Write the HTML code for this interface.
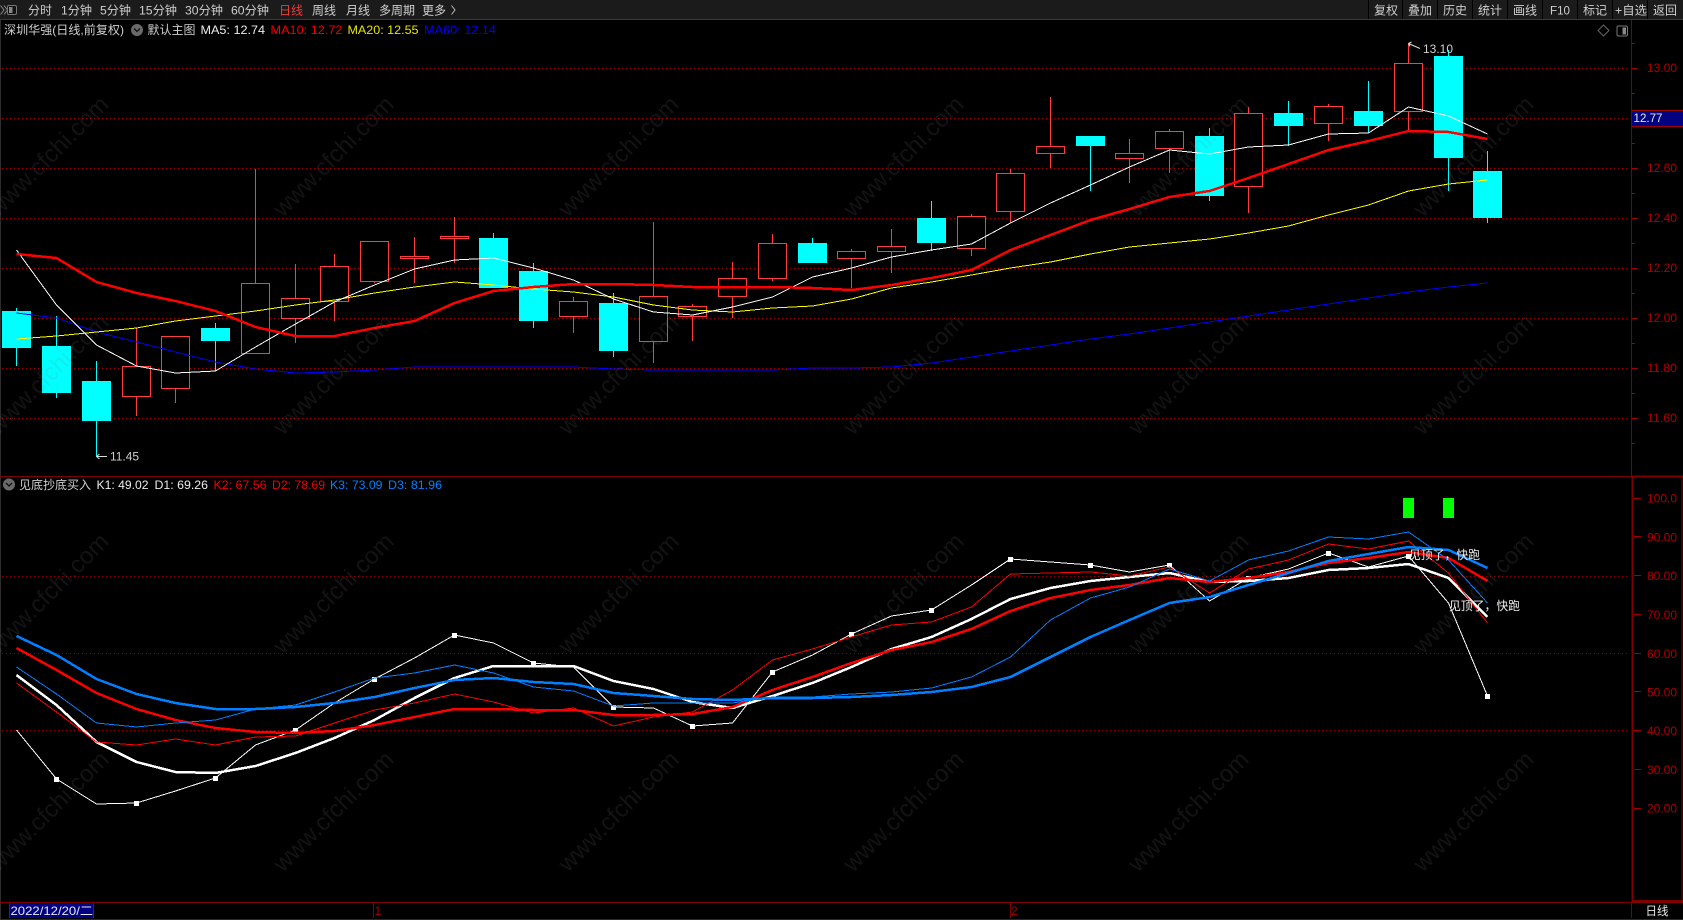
<!DOCTYPE html>
<html lang="zh">
<head>
<meta charset="utf-8">
<title>深圳华强</title>
<style>
html,body{margin:0;padding:0;background:#000;width:1683px;height:920px;overflow:hidden}
svg{display:block;position:absolute;left:0;top:0}
text{font-family:"Liberation Sans","Noto Sans CJK SC",sans-serif;font-size:12px}
.t{fill:#cfcfcf}
.ax{fill:#ad0000}
.wm{font-family:"Liberation Sans",sans-serif;font-size:24px;fill:#808080;fill-opacity:.15;text-anchor:middle}
.c{shape-rendering:crispEdges}
.l{fill:none;shape-rendering:crispEdges}
</style>
</head>
<body>
<svg width="1683" height="920" viewBox="0 0 1683 920" xmlns="http://www.w3.org/2000/svg">
<rect width="1683" height="920" fill="#000"/>

<!-- top bar -->
<g class="c">
<rect x="0" y="0" width="1683" height="19" fill="#1b1b1b"/>
<rect x="0" y="19" width="1683" height="1" fill="#3a3a3a"/>
<path d="M1368.5 0V19M1402.5 0V19M1437.5 0V19M1472.5 0V19M1507.5 0V19M1542.5 0V19M1577.5 0V19M1612.5 0V19M1647.5 0V19" stroke="#000" stroke-width="1"/>
<rect x="0" y="20" width="1" height="900" fill="#2d2d2d"/>
</g>
<path d="M0.5 5.5L4 10L0.5 14.5M4 5.5L7.500 10L4 14.5" fill="none" stroke="#888" stroke-width="1"/>
<rect x="7.500" y="5.500" width="9" height="9" rx="1.500" fill="#111" stroke="#777"/>
<rect x="9" y="7" width="3.500" height="6" fill="#888"/>

<text class="t" x="28" y="14.500" textLength="24" lengthAdjust="spacingAndGlyphs">分时</text>
<text class="t" x="61" y="14.500" textLength="31" lengthAdjust="spacingAndGlyphs">1分钟</text>
<text class="t" x="100" y="14.500" textLength="31" lengthAdjust="spacingAndGlyphs">5分钟</text>
<text class="t" x="139" y="14.500" textLength="38" lengthAdjust="spacingAndGlyphs">15分钟</text>
<text class="t" x="185" y="14.500" textLength="38" lengthAdjust="spacingAndGlyphs">30分钟</text>
<text class="t" x="231" y="14.500" textLength="38" lengthAdjust="spacingAndGlyphs">60分钟</text>
<text x="279" y="14.500" textLength="24" lengthAdjust="spacingAndGlyphs" fill="#f03a3a">日线</text>
<text class="t" x="312" y="14.500" textLength="24" lengthAdjust="spacingAndGlyphs">周线</text>
<text class="t" x="346" y="14.500" textLength="24" lengthAdjust="spacingAndGlyphs">月线</text>
<text class="t" x="379" y="14.500" textLength="36" lengthAdjust="spacingAndGlyphs">多周期</text>
<text class="t" x="422" y="14.500" textLength="24" lengthAdjust="spacingAndGlyphs">更多</text>
<path d="M451.500 5.500L455 10L451.500 14.500" fill="none" stroke="#bbb"/>

<text class="t" x="1374" y="14.500" textLength="24" lengthAdjust="spacingAndGlyphs">复权</text>
<text class="t" x="1408" y="14.500" textLength="24" lengthAdjust="spacingAndGlyphs">叠加</text>
<text class="t" x="1443" y="14.500" textLength="24" lengthAdjust="spacingAndGlyphs">历史</text>
<text class="t" x="1478" y="14.500" textLength="24" lengthAdjust="spacingAndGlyphs">统计</text>
<text class="t" x="1513" y="14.500" textLength="24" lengthAdjust="spacingAndGlyphs">画线</text>
<text class="t" x="1550" y="14.500" textLength="20" lengthAdjust="spacingAndGlyphs">F10</text>
<text class="t" x="1583" y="14.500" textLength="24" lengthAdjust="spacingAndGlyphs">标记</text>
<text class="t" x="1615" y="14.500" textLength="32" lengthAdjust="spacingAndGlyphs">+自选</text>
<text class="t" x="1653" y="14.500" textLength="24" lengthAdjust="spacingAndGlyphs">返回</text>

<!-- grid -->
<g class="c" stroke="#a00000" stroke-width="1" stroke-dasharray="1 3" fill="none">
<path d="M2 68.500H1628M2 118.500H1628M2 168.500H1628M2 218.500H1628M2 268.500H1628M2 318.500H1628M2 368.500H1628M2 418.500H1628"/>
<path d="M2 576.500H1628M2 653.500H1628M2 730.500H1628" stroke="#900000"/>
</g>

<!-- axes -->
<g class="c" fill="none" stroke="#800000">
<path d="M1631.500 20V476"/>
<path d="M0 476.500H1632"/>
<path d="M1632 68.500h6M1632 118.500h6M1632 168.500h6M1632 218.500h6M1632 268.500h6M1632 318.500h6M1632 368.500h6M1632 418.500h6" stroke="#a00000"/>
<path d="M1632 43.500h3M1632 93.500h3M1632 143.500h3M1632 193.500h3M1632 243.500h3M1632 293.500h3M1632 343.500h3M1632 393.500h3M1632 443.500h3" stroke="#a00000"/>
<path d="M1631 476.500H1683" stroke-width="2"/>
<path d="M1632.500 476V902" stroke-width="2"/>
<path d="M1682 476V902"/>
<path d="M1632 901H1683" stroke-width="2"/>
<path d="M0 902.500H1683"/>
<path d="M1634 498.500h7M1634 536.500h7M1634 575.500h7M1634 614.500h7M1634 653.500h7M1634 691.500h7M1634 730.500h7M1634 769.500h7M1634 808.500h7" stroke="#a00000"/>
<path d="M1631.500 903V918M373.500 903V918M1010.500 903V918"/>
</g>

<g class="ax">
<text class="ax" x="1647" y="72" textLength="30" lengthAdjust="spacingAndGlyphs">13.00</text>
<text class="ax" x="1647" y="172" textLength="30" lengthAdjust="spacingAndGlyphs">12.60</text>
<text class="ax" x="1647" y="222" textLength="30" lengthAdjust="spacingAndGlyphs">12.40</text>
<text class="ax" x="1647" y="272" textLength="30" lengthAdjust="spacingAndGlyphs">12.20</text>
<text class="ax" x="1647" y="322" textLength="30" lengthAdjust="spacingAndGlyphs">12.00</text>
<text class="ax" x="1647" y="372" textLength="30" lengthAdjust="spacingAndGlyphs">11.80</text>
<text class="ax" x="1647" y="422" textLength="30" lengthAdjust="spacingAndGlyphs">11.60</text>
<text class="ax" x="1647" y="502.500" textLength="30" lengthAdjust="spacingAndGlyphs">100.0</text>
<text class="ax" x="1647" y="541.500" textLength="30" lengthAdjust="spacingAndGlyphs">90.00</text>
<text class="ax" x="1647" y="580" textLength="30" lengthAdjust="spacingAndGlyphs">80.00</text>
<text class="ax" x="1647" y="619" textLength="30" lengthAdjust="spacingAndGlyphs">70.00</text>
<text class="ax" x="1647" y="658" textLength="30" lengthAdjust="spacingAndGlyphs">60.00</text>
<text class="ax" x="1647" y="696.500" textLength="30" lengthAdjust="spacingAndGlyphs">50.00</text>
<text class="ax" x="1647" y="735" textLength="30" lengthAdjust="spacingAndGlyphs">40.00</text>
<text class="ax" x="1647" y="774" textLength="30" lengthAdjust="spacingAndGlyphs">30.00</text>
<text class="ax" x="1647" y="812.500" textLength="30" lengthAdjust="spacingAndGlyphs">20.00</text>
</g>

<!-- price tag -->
<rect class="c" x="1632" y="111" width="51" height="15" fill="#000080"/>
<path class="c" d="M1632 110.500H1683M1632 126.500H1683" stroke="#a00000" fill="none"/>
<text x="1633.500" y="122" textLength="29" lengthAdjust="spacingAndGlyphs" fill="#e8e8e8">12.77</text>

<!-- candles: wicks -->
<g class="c" fill="none" stroke-width="1">
<path stroke="#00ffff" d="M16.500 308V366M56.500 316V398M96.500 361V457M215.500 323V371M493.500 233V288M533.500 263V328M613.500 293V357M812.500 238V263M931.500 201V251M1090.500 136V191M1209.500 128V201M1288.500 101V146M1368.500 81V132M1448.500 50V191M1487.500 151V223"/>
<path stroke="#ff3c3c" d="M136.500 328V416M175.500 336V403M255.500 169V353M295.500 264V343M334.500 254V321M374.500 241V283M414.500 237V283M454.500 217V263M573.500 297V333M653.500 222V363M692.500 304V341M732.500 262V318M772.500 234V281M851.500 249V288M891.500 229V273M971.500 214V256M1010.500 169V223M1050.500 97V168M1129.500 139V183M1169.500 129V173M1248.500 107V213M1328.500 104V141M1408.500 43V130"/>
</g>
<!-- cyan bodies -->
<g class="c" fill="#00ffff">
<rect x="2" y="311" width="29" height="37"/>
<rect x="42" y="346" width="29" height="47"/>
<rect x="82" y="381" width="29" height="40"/>
<rect x="201" y="328" width="29" height="13"/>
<rect x="479" y="238" width="29" height="50"/>
<rect x="519" y="271" width="29" height="50"/>
<rect x="599" y="303" width="29" height="48"/>
<rect x="798" y="243" width="29" height="20"/>
<rect x="917" y="218" width="29" height="25"/>
<rect x="1076" y="136" width="29" height="10"/>
<rect x="1195" y="136" width="29" height="60"/>
<rect x="1274" y="113" width="29" height="13"/>
<rect x="1354" y="111" width="29" height="15"/>
<rect x="1434" y="56" width="29" height="102"/>
<rect x="1473" y="171" width="29" height="47"/>
</g>
<!-- red bodies -->
<g class="c" fill="#000" stroke="#ff3c3c" stroke-width="1">
<rect x="122.500" y="366.500" width="28" height="30"/>
<rect x="161.500" y="336.500" width="28" height="52"/>
<rect x="241.500" y="283.500" width="28" height="70"/>
<rect x="281.500" y="298.500" width="28" height="20"/>
<rect x="320.500" y="266.500" width="28" height="35"/>
<rect x="360.500" y="241.500" width="28" height="40"/>
<rect x="400.500" y="256.500" width="28" height="2"/>
<rect x="440.500" y="236.500" width="28" height="2"/>
<rect x="559.500" y="301.500" width="28" height="15"/>
<rect x="639.500" y="296.500" width="28" height="45"/>
<rect x="678.500" y="306.500" width="28" height="10"/>
<rect x="718.500" y="278.500" width="28" height="18"/>
<rect x="758.500" y="243.500" width="28" height="35"/>
<rect x="837.500" y="251.500" width="28" height="7"/>
<rect x="877.500" y="246.500" width="28" height="5"/>
<rect x="957.500" y="216.500" width="28" height="32"/>
<rect x="996.500" y="173.500" width="28" height="38"/>
<rect x="1036.500" y="146.500" width="28" height="7"/>
<rect x="1115.500" y="153.500" width="28" height="5"/>
<rect x="1155.500" y="131.500" width="28" height="17"/>
<rect x="1234.500" y="113.500" width="28" height="73"/>
<rect x="1314.500" y="106.500" width="28" height="17"/>
<rect x="1394.500" y="63.500" width="28" height="48"/>
</g>

<!-- MAs -->
<polyline class="l" stroke="#0000ff" stroke-width="1" points="16.500,313 56.500,318 96.500,332 136.500,342 175.500,352 215.500,362 255.500,369 295.500,373 334.500,372 374.500,370 414.500,367 454.500,367 493.500,367 533.500,367 573.500,367 613.500,369 653.500,370 692.500,370 732.500,370 772.500,370 812.500,368 851.500,368 891.500,367 931.500,363 971.500,357 1010.500,351 1050.500,345 1090.500,339 1129.500,334 1169.500,328 1209.500,322 1248.500,316 1288.500,310 1328.500,304 1368.500,298 1408.500,292 1448.500,287 1487.500,283"/>
<polyline class="l" stroke="#ffff00" stroke-width="1" points="16.500,339 56.500,336 96.500,332 136.500,328 175.500,321 215.500,316 255.500,311 295.500,305 334.500,300 374.500,293 414.500,287 454.500,282 493.500,285 533.500,289 573.500,292 613.500,297 653.500,305 692.500,310 732.500,312 772.500,308 812.500,306 851.500,299 891.500,288 931.500,282 971.500,275 1010.500,268 1050.500,262 1090.500,254 1129.500,247 1169.500,243 1209.500,239 1248.500,233 1288.500,226 1328.500,215 1368.500,205 1408.500,191 1448.500,184 1487.500,180"/>
<polyline class="l" stroke="#ffffff" stroke-width="1" points="16.500,250 56.500,305 96.500,345 136.500,366 175.500,373 215.500,371 255.500,347 295.500,324 334.500,302 374.500,285 414.500,269 454.500,260 493.500,258 533.500,268 573.500,280 613.500,299 653.500,312 692.500,315 732.500,307 772.500,297 812.500,277 851.500,268 891.500,257 931.500,250 971.500,244 1010.500,223 1050.500,203 1090.500,185 1129.500,167 1169.500,150 1209.500,154 1248.500,147 1288.500,145 1328.500,134 1368.500,133 1408.500,107 1448.500,116 1487.500,134"/>
<polyline class="l" stroke="#ff0000" stroke-width="2.500" points="16.500,254 56.500,258 96.500,282 136.500,293 175.500,301 215.500,311 255.500,327 295.500,336 334.500,336 374.500,328 414.500,321 454.500,303 493.500,291 533.500,287 573.500,284 613.500,284 653.500,285 692.500,287 732.500,287 772.500,287 812.500,288 851.500,290 891.500,285 931.500,278 971.500,270 1010.500,250 1050.500,235 1090.500,220 1129.500,209 1169.500,197 1209.500,191 1248.500,178 1288.500,164 1328.500,150 1368.500,141 1408.500,131 1448.500,132 1487.500,139"/>

<!-- high/low labels -->
<path d="M1408.500 43.500L1420 48.500M1408.500 43.500l3 -1.500M1408.500 43.500l1.500 3" fill="none" stroke="#ddd"/>
<text x="1423" y="53" textLength="30" lengthAdjust="spacingAndGlyphs" fill="#cfcfcf">13.10</text>
<path d="M96.500 456.500H107M96.500 456.500l3 -2.500M96.500 456.500l3 2.500" fill="none" stroke="#ddd"/>
<text x="110" y="460.500" textLength="29" lengthAdjust="spacingAndGlyphs" fill="#cfcfcf">11.45</text>

<!-- indicator lines -->
<polyline class="l" stroke="#ffffff" stroke-width="1" points="16.500,730 56.500,779 96.500,804 136.500,803 175.500,791 215.500,778 255.500,745 295.500,730 334.500,703 374.500,679 414.500,658 454.500,635 493.500,643 533.500,663 573.500,667 613.500,707 653.500,708 692.500,726 732.500,723 772.500,672 812.500,655 851.500,634 891.500,616 931.500,610 971.500,585 1010.500,559 1050.500,562 1090.500,565 1129.500,572 1169.500,565 1209.500,601 1248.500,578 1288.500,569 1328.500,553 1368.500,567 1408.500,556 1448.500,603 1487.500,696"/>
<path class="c" fill="#fff" d="M54 777h5v5h-5zM134 801h5v5h-5zM213 776h5v5h-5zM293 728h5v5h-5zM372 677h5v5h-5zM452 633h5v5h-5zM531 661h5v5h-5zM611 705h5v5h-5zM690 724h5v5h-5zM770 670h5v5h-5zM849 632h5v5h-5zM929 608h5v5h-5zM1008 557h5v5h-5zM1088 563h5v5h-5zM1167 563h5v5h-5zM1246 576h5v5h-5zM1326 551h5v5h-5zM1406 554h5v5h-5zM1485 694h5v5h-5z"/>
<polyline class="l" stroke="#ffffff" stroke-width="2.500" points="16.500,675 56.500,705 96.500,742 136.500,762 175.500,772 215.500,773 255.500,766 295.500,753 334.500,738 374.500,720 414.500,698 454.500,678 493.500,666 533.500,666 573.500,666 613.500,681 653.500,689 692.500,702 732.500,708 772.500,696 812.500,683 851.500,667 891.500,649 931.500,637 971.500,619 1010.500,599 1050.500,588 1090.500,581 1129.500,577 1169.500,573 1209.500,582 1248.500,581 1288.500,578 1328.500,570 1368.500,568 1408.500,564 1448.500,578 1487.500,617"/>
<polyline class="l" stroke="#ff0000" stroke-width="1" points="16.500,683 56.500,712 96.500,742 136.500,745 175.500,739 215.500,745 255.500,737 295.500,736 334.500,723 374.500,710 414.500,703 454.500,694 493.500,702 533.500,713 573.500,708 613.500,726 653.500,717 692.500,712 732.500,690 772.500,660 812.500,649 851.500,637 891.500,625 931.500,622 971.500,607 1010.500,574 1050.500,573 1090.500,572 1129.500,576 1169.500,567 1209.500,593 1248.500,569 1288.500,560 1328.500,544 1368.500,549 1408.500,541 1448.500,573 1487.500,623"/>
<polyline class="l" stroke="#ff0000" stroke-width="2.500" points="16.500,648 56.500,670 96.500,693 136.500,709 175.500,720 215.500,728 255.500,732 295.500,733 334.500,731 374.500,725 414.500,717 454.500,709 493.500,709 533.500,710 573.500,710 613.500,715 653.500,715 692.500,714 732.500,707 772.500,690 812.500,677 851.500,663 891.500,650 931.500,642 971.500,629 1010.500,611 1050.500,598 1090.500,590 1129.500,585 1169.500,578 1209.500,582 1248.500,578 1288.500,572 1328.500,563 1368.500,558 1408.500,552 1448.500,558 1487.500,581"/>
<polyline class="l" stroke="#0080ff" stroke-width="1" points="16.500,667 56.500,694 96.500,723 136.500,727 175.500,723 215.500,720 255.500,709 295.500,705 334.500,692 374.500,678 414.500,673 454.500,665 493.500,673 533.500,687 573.500,691 613.500,706 653.500,703 692.500,703 732.500,703 772.500,697 812.500,697 851.500,694 891.500,692 931.500,688 971.500,677 1010.500,657 1050.500,620 1090.500,598 1129.500,587 1169.500,569 1209.500,581 1248.500,560 1288.500,551 1328.500,537 1368.500,539 1408.500,532 1448.500,560 1487.500,603"/>
<polyline class="l" stroke="#0080ff" stroke-width="2.500" points="16.500,636 56.500,655 96.500,679 136.500,694 175.500,703 215.500,709 255.500,709 295.500,707 334.500,703 374.500,697 414.500,688 454.500,680 493.500,678 533.500,682 573.500,684 613.500,693 653.500,696 692.500,699 732.500,700 772.500,698 812.500,698 851.500,697 891.500,695 931.500,692 971.500,687 1010.500,677 1050.500,657 1090.500,637 1129.500,620 1169.500,603 1209.500,597 1248.500,585 1288.500,573 1328.500,561 1368.500,554 1408.500,547 1448.500,550 1487.500,568"/>

<!-- green signal -->
<rect class="c" x="1403" y="498" width="11" height="20" fill="#00ff00"/>
<rect class="c" x="1443" y="498" width="11" height="20" fill="#00ff00"/>

<text x="1409" y="559" textLength="71" lengthAdjust="spacingAndGlyphs" fill="#f0f0f0">见顶了，快跑</text>
<text x="1449" y="610" textLength="71" lengthAdjust="spacingAndGlyphs" fill="#f0f0f0">见顶了，快跑</text>

<!-- info rows -->
<text class="t" x="4" y="34" textLength="120" lengthAdjust="spacingAndGlyphs">深圳华强(日线,前复权)</text>
<circle cx="137" cy="30" r="6" fill="#6a6a6a"/>
<path d="M134 28.500L137 31.500L140 28.500" fill="none" stroke="#111" stroke-width="1.300"/>
<text class="t" x="147.500" y="34" textLength="48" lengthAdjust="spacingAndGlyphs">默认主图</text>
<text x="200.500" y="34" textLength="64.500" lengthAdjust="spacingAndGlyphs" fill="#ececec">MA5: 12.74</text>
<text x="270.500" y="34" textLength="72" lengthAdjust="spacingAndGlyphs" fill="#f00000">MA10: 12.72</text>
<text x="347.500" y="34" textLength="71" lengthAdjust="spacingAndGlyphs" fill="#e6e600">MA20: 12.55</text>
<text x="424" y="34" textLength="72" lengthAdjust="spacingAndGlyphs" fill="#0000ff">MA60: 12.14</text>

<circle cx="9" cy="484.500" r="6" fill="#6a6a6a"/>
<path d="M6 483L9 486L12 483" fill="none" stroke="#111" stroke-width="1.300"/>
<text class="t" x="19" y="489" textLength="72" lengthAdjust="spacingAndGlyphs">见底抄底买入</text>
<text x="96.500" y="489" textLength="52" lengthAdjust="spacingAndGlyphs" fill="#ececec">K1: 49.02</text>
<text x="154.500" y="489" textLength="53.500" lengthAdjust="spacingAndGlyphs" fill="#ececec">D1: 69.26</text>
<text x="213.500" y="489" textLength="53" lengthAdjust="spacingAndGlyphs" fill="#f00000">K2: 67.56</text>
<text x="272" y="489" textLength="53" lengthAdjust="spacingAndGlyphs" fill="#f00000">D2: 78.69</text>
<text x="330" y="489" textLength="52.500" lengthAdjust="spacingAndGlyphs" fill="#0080ff">K3: 73.09</text>
<text x="388" y="489" textLength="54" lengthAdjust="spacingAndGlyphs" fill="#0080ff">D3: 81.96</text>

<!-- top right icons -->
<path d="M1603.500 25L1609 30.500L1603.500 36L1598 30.500Z" fill="none" stroke="#666"/>
<rect x="1617" y="26" width="10.500" height="10" rx="1.500" fill="none" stroke="#777"/>
<rect x="1622.500" y="27.500" width="3.500" height="7" fill="#888"/>

<!-- bottom strip -->
<rect class="c" x="1" y="919" width="1682" height="1" fill="#2a2a2a"/>
<rect class="c" x="10" y="903" width="84" height="15" fill="#000080"/>
<path class="c" d="M9.500 903V918M93.500 903V918" stroke="#a00000" fill="none"/>
<text x="10.500" y="915" textLength="82.500" lengthAdjust="spacingAndGlyphs" fill="#e8e8e8">2022/12/20/二</text>
<text class="ax" x="374.500" y="915">1</text>
<text class="ax" x="1011" y="915">2</text>
<text x="1645.500" y="915" textLength="23" lengthAdjust="spacingAndGlyphs" fill="#e8e8e8">日线</text>

<!-- watermark -->
<g>
<text class="wm" transform="rotate(-45 54 162)" x="54" y="162">www.cfchi.com</text>
<text class="wm" transform="rotate(-45 339 162)" x="339" y="162">www.cfchi.com</text>
<text class="wm" transform="rotate(-45 624 162)" x="624" y="162">www.cfchi.com</text>
<text class="wm" transform="rotate(-45 909 162)" x="909" y="162">www.cfchi.com</text>
<text class="wm" transform="rotate(-45 1194 162)" x="1194" y="162">www.cfchi.com</text>
<text class="wm" transform="rotate(-45 1479 162)" x="1479" y="162">www.cfchi.com</text>
<text class="wm" transform="rotate(-45 54 380)" x="54" y="380">www.cfchi.com</text>
<text class="wm" transform="rotate(-45 339 380)" x="339" y="380">www.cfchi.com</text>
<text class="wm" transform="rotate(-45 624 380)" x="624" y="380">www.cfchi.com</text>
<text class="wm" transform="rotate(-45 909 380)" x="909" y="380">www.cfchi.com</text>
<text class="wm" transform="rotate(-45 1194 380)" x="1194" y="380">www.cfchi.com</text>
<text class="wm" transform="rotate(-45 1479 380)" x="1479" y="380">www.cfchi.com</text>
<text class="wm" transform="rotate(-45 54 599)" x="54" y="599">www.cfchi.com</text>
<text class="wm" transform="rotate(-45 339 599)" x="339" y="599">www.cfchi.com</text>
<text class="wm" transform="rotate(-45 624 599)" x="624" y="599">www.cfchi.com</text>
<text class="wm" transform="rotate(-45 909 599)" x="909" y="599">www.cfchi.com</text>
<text class="wm" transform="rotate(-45 1194 599)" x="1194" y="599">www.cfchi.com</text>
<text class="wm" transform="rotate(-45 1479 599)" x="1479" y="599">www.cfchi.com</text>
<text class="wm" transform="rotate(-45 54 817)" x="54" y="817">www.cfchi.com</text>
<text class="wm" transform="rotate(-45 339 817)" x="339" y="817">www.cfchi.com</text>
<text class="wm" transform="rotate(-45 624 817)" x="624" y="817">www.cfchi.com</text>
<text class="wm" transform="rotate(-45 909 817)" x="909" y="817">www.cfchi.com</text>
<text class="wm" transform="rotate(-45 1194 817)" x="1194" y="817">www.cfchi.com</text>
<text class="wm" transform="rotate(-45 1479 817)" x="1479" y="817">www.cfchi.com</text>
</g>
</svg>
</body>
</html>
